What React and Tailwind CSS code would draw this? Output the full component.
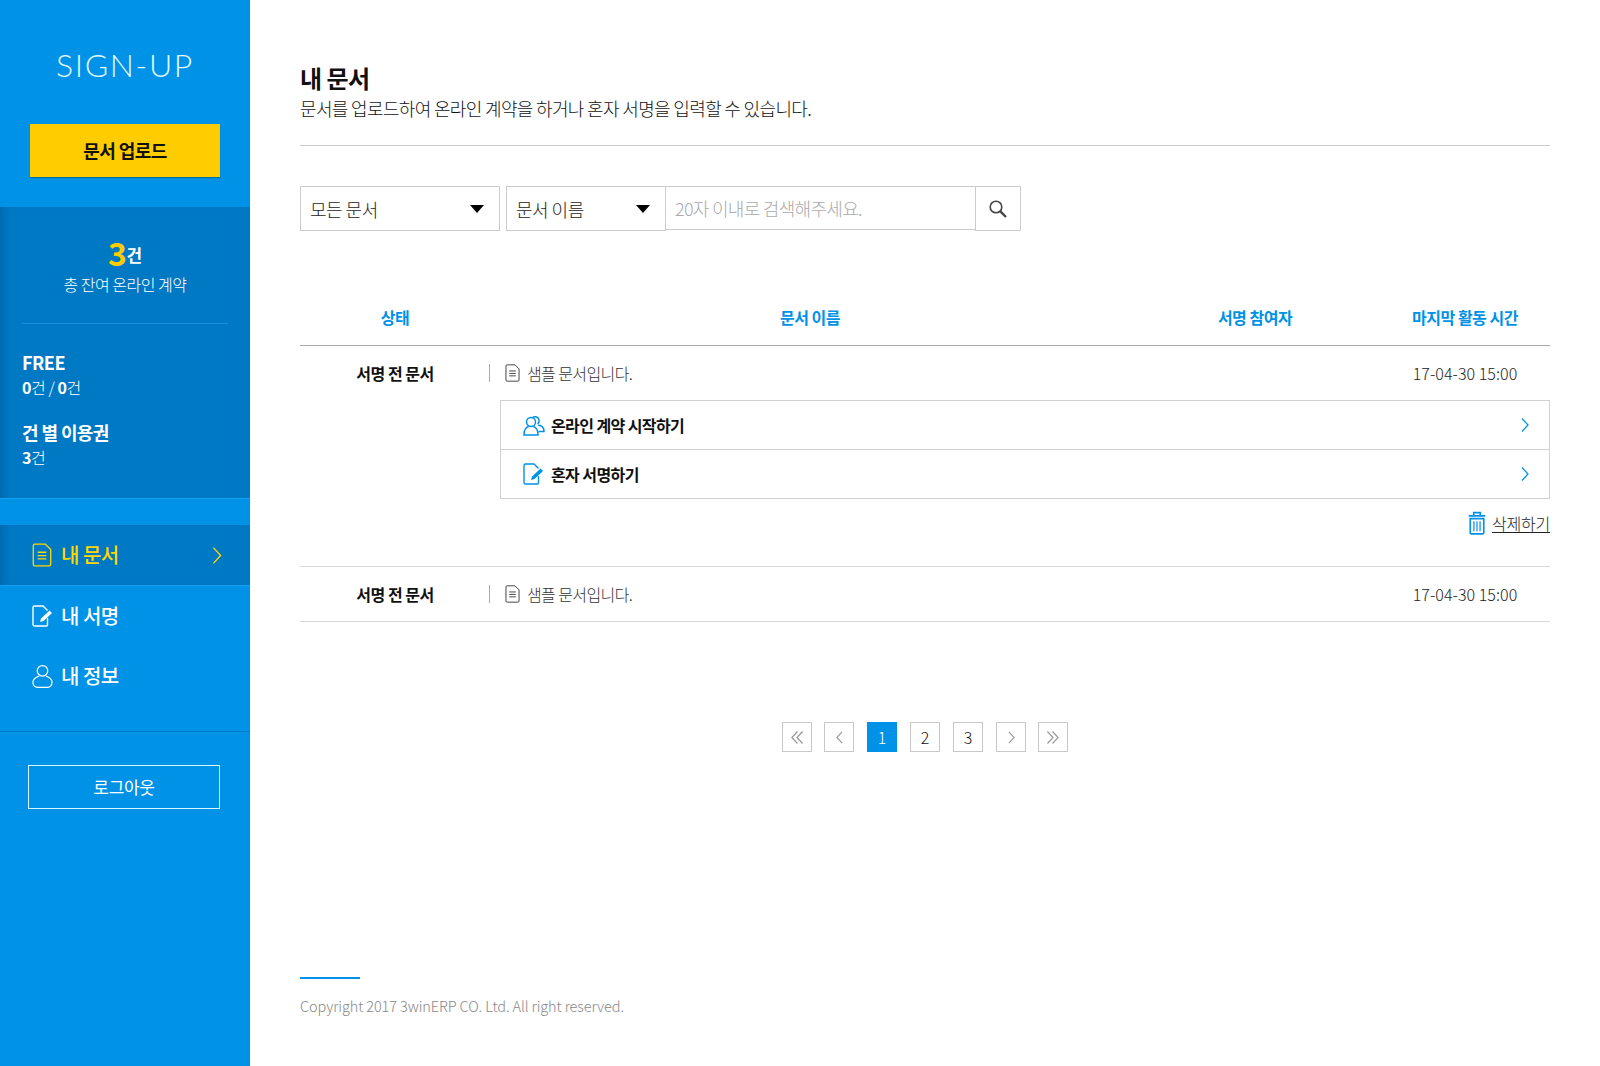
const DocIcon = ({ className }) => (
  <svg viewBox="0 0 18 22" fill="none" stroke="currentColor" strokeWidth="1.2" className={className}>
    <path d="M2.500 1h9.500l5 5v13.500a1.500 1.500 0 0 1-1.500 1.500h-13A1.500 1.500 0 0 1 1 19.500v-17A1.500 1.500 0 0 1 2.500 1z" />
    <path d="M5 8.500h8M5 11.500h8M5 14.500h8" />
  </svg>
);

const SignIcon = ({ className }) => (
  <svg viewBox="0 0 22 22" fill="none" stroke="currentColor" strokeWidth="1.4" className={className}>
    <path d="M15 21H2.500A1.500 1.500 0 0 1 1 19.500v-17A1.500 1.500 0 0 1 2.500 1H11l4.500 4.500" />
    <path d="M15.500 13v6.500a1.500 1.500 0 0 1-.5 1.500" />
    <path d="M8 17l1-3.500 8.500-8 2.500 2.500-8.500 8z" fill="currentColor" stroke="none" />
  </svg>
);

const UserIcon = ({ className }) => (
  <svg viewBox="0 0 22 25" fill="none" stroke="currentColor" strokeWidth="1.3" className={className}>
    <circle cx="11" cy="6.500" r="5.500" />
    <path d="M7.500 12C3.500 13.500 1 15.500 1 18.500c0 3.500 2.500 5.500 5.500 5.500h9c3 0 5.500-2 5.500-5.500 0-3-2.500-5-6.500-6.500" />
  </svg>
);

const UsersIcon = ({ className }) => (
  <svg viewBox="0 0 22 21" fill="none" stroke="currentColor" strokeWidth="1.5" className={className}>
    <circle cx="8" cy="7" r="4.500" />
    <path d="M5.500 11.500C2.500 12.500 1 15 1 20h14c0-5-1.500-7.500-4.500-8.500" />
    <path d="M9.500 2.500a4 4 0 1 1 5 6.500M15 10c3.500.5 6 2.500 6 6.500h-5.500" />
  </svg>
);

const TrashIcon = ({ className }) => (
  <svg viewBox="0 0 16 22" fill="none" stroke="currentColor" strokeWidth="1.500" className={className}>
    <path d="M.5 4.500h15M5 4V1.500h6V4" />
    <path d="M1.800 7h12.400v13a1 1 0 0 1-1 1H2.800a1 1 0 0 1-1-1z" />
    <path d="M5.200 9.500v9M8 9.500v9M10.800 9.500v9" strokeWidth="1.100" />
  </svg>
);

const Chevron = ({ className, strokeWidth = 1.3 }) => (
  <svg viewBox="0 0 8 14" fill="none" stroke="currentColor" strokeWidth={strokeWidth} className={className}>
    <path d="M1 .5L7 7l-6 6.500" />
  </svg>
);

const ChevronBack = ({ className }) => (
  <svg viewBox="0 0 8 14" fill="none" stroke="currentColor" strokeWidth="1.300" className={className}>
    <path d="M7 .5L1 7l6 6.500" />
  </svg>
);

const DoubleBack = ({ className }) => (
  <svg viewBox="0 0 13 14" fill="none" stroke="currentColor" strokeWidth="1.300" className={className}>
    <path d="M7 .5L1 7l6 6.500M12.500 .5L6.500 7l6 6.500" />
  </svg>
);

const DoubleNext = ({ className }) => (
  <svg viewBox="0 0 13 14" fill="none" stroke="currentColor" strokeWidth="1.300" className={className}>
    <path d="M.5 .5L6.500 7l-6 6.500M6 .5L12 7l-6 6.500" />
  </svg>
);

const SearchIcon = ({ className }) => (
  <svg viewBox="0 0 18 18" fill="none" stroke="currentColor" className={className}>
    <circle cx="7" cy="7" r="5.800" strokeWidth="1.600" />
    <path d="M11.300 11.300L17 17" strokeWidth="2.400" />
  </svg>
);

const Caret = () => (
  <span className="w-0 h-0 border-l-[7px] border-r-[7px] border-t-[8px] border-l-transparent border-r-transparent border-t-black" />
);

const NavItem = ({ icon, label, active }) => (
  <div
    className={
      active
        ? "h-[61px] flex items-center pl-[32px] pr-[28px] bg-[#0079c4] border-b border-[#12a2f5] text-[#ffd800] shadow-[inset_8px_0_10px_-6px_rgba(0,60,110,0.35)]"
        : "h-[60px] flex items-center pl-[32px] pr-[28px] text-white"
    }
  >
    {icon}
    <span className="ml-[9px] text-[20px] leading-none font-medium tracking-[-0.5px]">{label}</span>
    {active && <Chevron className="ml-auto w-[10px] h-[17px]" strokeWidth={1.1} />}
  </div>
);

const PageBtn = ({ children, active, className = "" }) => (
  <div
    className={
      (active
        ? "w-[30px] h-[30px] flex items-center justify-center bg-[#0092e6] text-white text-[16px] font-light "
        : "w-[30px] h-[30px] flex items-center justify-center border border-[#c8c8c8] text-[#111] text-[16px] font-light ") + className
    }
  >
    {children}
  </div>
);

const DocRow = () => (
  <div className="flex items-center h-[54px]">
    <div className="w-[190px] text-center text-[16px] font-bold tracking-[-0.5px] text-[#111]">서명 전 문서</div>
    <div className="w-px -ml-px h-[18px] bg-[#aaa] mr-[15px]" />
    <DocIcon className="w-[15px] h-[18px] text-[#444] mr-[7px]" />
    <span className="text-[16px] font-light tracking-[-0.6px] text-[#333]">샘플 문서입니다.</span>
    <div className="ml-auto w-[170px] text-center text-[16px] font-light tracking-[0.05px] text-[#222]">17-04-30 15:00</div>
  </div>
);

const ActionRow = ({ icon, label, bordered }) => (
  <div className={bordered ? "h-[49px] flex items-center pl-[22px] pr-[20px] border-b border-[#d0d0d0]" : "h-[48px] flex items-center pl-[22px] pr-[20px]"}>
    {icon}
    <span className="ml-[6px] text-[16px] font-bold tracking-[-0.6px] text-[#111]">{label}</span>
    <Chevron className="ml-auto w-[8px] h-[14px] text-[#0092e6]" />
  </div>
);

export default function App() {
  return (
    <div className="flex min-h-[1066px] bg-white font-['Noto_Sans_CJK_KR','Noto_Sans',sans-serif]">
      <aside className="w-[250px] shrink-0 bg-[#0092e6] flex flex-col">
        <div className="h-[124px] pt-[43px] text-center text-[32px] leading-[44px] font-light tracking-[1.6px] text-[#e0faff] font-['Lato',sans-serif]">
          SIGN-UP
        </div>
        <div className="mx-[30px] h-[53px] bg-[#ffcc00] flex items-center justify-center text-[18px] font-bold tracking-[-0.6px] text-[#111] shadow-[0_1px_1px_rgba(0,80,90,0.5)]">
          문서 업로드
        </div>
        <div className="mt-[30px] h-[292px] bg-[#0079c4] border-b border-[#12a2f5] shadow-[inset_8px_0_10px_-6px_rgba(0,60,110,0.35)] text-white">
          <div className="mx-[22px] h-[117px] pt-[27px] border-b border-[#1b90d6] text-center">
            <div className="h-[36px] flex items-end justify-center leading-none">
              <span className="text-[32px] font-bold leading-[36px] tracking-[-0.5px] text-[#ffcc00]">3</span>
              <span className="text-[17px] font-bold leading-[30px]">건</span>
            </div>
            <div className="mt-[3px] text-[16px] leading-[22px] font-light tracking-[-0.5px] text-white">총 잔여 온라인 계약</div>
          </div>
          <div className="pl-[22px] pt-[25px]">
            <div className="text-[18px] leading-[26px] font-bold tracking-[-0.5px]">FREE</div>
            <div className="text-[16px] leading-[24px] tracking-[-0.4px] font-light"><span className="font-bold">0</span>건 / <span className="font-bold">0</span>건</div>
            <div className="mt-[20px] text-[18px] leading-[26px] font-bold tracking-[-0.6px]">건 별 이용권</div>
            <div className="text-[16px] leading-[24px] tracking-[-0.4px] font-light"><span className="font-bold">3</span>건</div>
          </div>
        </div>
        <nav className="mt-[26px] pb-[25px] border-b border-[#0079c4]">
          <NavItem active label="내 문서" icon={<DocIcon className="w-[20px] h-[24px]" />} />
          <NavItem label="내 서명" icon={<SignIcon className="w-[22px] h-[22px] -mr-[2px]" />} />
          <NavItem label="내 정보" icon={<UserIcon className="w-[21px] h-[25px] -mr-px" />} />
        </nav>
        <div className="ml-[28px] mt-[33px] w-[192px] h-[44px] border border-[#d8f6ff] flex items-center justify-center text-[17px] text-white font-normal tracking-[-0.3px]">
          로그아웃
        </div>
      </aside>

      <main className="flex-1 pl-[50px] pr-[50px] flex flex-col">
        <h1 className="mt-[61px] text-[24px] leading-[34px] font-bold tracking-[-0.5px] text-[#111]">내 문서</h1>
        <p className="text-[18px] leading-[26px] font-light tracking-[-0.65px] text-[#111]">
          문서를 업로드하여 온라인 계약을 하거나 혼자 서명을 입력할 수 있습니다.
        </p>
        <div className="mt-[24px] h-px bg-[#ccc]" />

        <div className="mt-[40px] flex items-start">
          <div className="w-[200px] h-[45px] border border-[#ccc] flex items-center justify-between pl-[9px] pr-[15px]">
            <span className="pt-[2px] text-[18px] font-light tracking-[-0.5px] text-[#222]">모든 문서</span>
            <Caret />
          </div>
          <div className="ml-[6px] w-[160px] h-[45px] border border-[#ccc] flex items-center justify-between pl-[9px] pr-[15px]">
            <span className="pt-[2px] text-[18px] font-light tracking-[-0.5px] text-[#222]">문서 이름</span>
            <Caret />
          </div>
          <div className="w-[309px] h-[44px] border-y border-[#ccc] flex items-center pl-[9px] text-[18px] font-light tracking-[-0.7px] text-[#aaa]">
            20자 이내로 검색해주세요.
          </div>
          <div className="w-[46px] h-[45px] border border-[#ccc] flex items-center justify-center">
            <SearchIcon className="w-[18px] h-[18px] text-[#444]" />
          </div>
        </div>

        <div className="mt-[60px] flex items-center h-[55px] pb-[3px] border-b border-[#aaa] text-[16px] font-bold tracking-[-0.5px] text-[#0092e6] text-center">
          <div className="w-[190px]">상태</div>
          <div className="w-[640px]">문서 이름</div>
          <div className="w-[250px]">서명 참여자</div>
          <div className="w-[170px]">마지막 활동 시간</div>
        </div>

        <DocRow />
        <div className="ml-[200px] border border-[#d0d0d0]">
          <ActionRow bordered label="온라인 계약 시작하기" icon={<UsersIcon className="w-[22px] h-[21px] text-[#0092e6]" />} />
          <ActionRow label="혼자 서명하기" icon={<SignIcon className="w-[22px] h-[22px] text-[#0092e6]" />} />
        </div>
        <div className="mt-[12px] flex items-center justify-end h-[24px]">
          <TrashIcon className="w-[18px] h-[24px] text-[#0092e6] mr-[6px]" />
          <span className="text-[16px] font-light tracking-[-0.25px] text-[#222] underline underline-offset-2">삭제하기</span>
        </div>
        <div className="mt-[31px] border-y border-[#d8d8d8]">
          <DocRow />
        </div>

        <div className="mt-[100px] flex items-center justify-center gap-[13px]">
          <PageBtn className="-mr-px"><DoubleBack className="w-[12px] h-[13px] text-[#999]" /></PageBtn>
          <PageBtn><ChevronBack className="w-[7px] h-[13px] text-[#999]" /></PageBtn>
          <PageBtn active>1</PageBtn>
          <PageBtn>2</PageBtn>
          <PageBtn>3</PageBtn>
          <PageBtn className="-mr-px"><Chevron className="w-[7px] h-[13px] text-[#999]" /></PageBtn>
          <PageBtn><DoubleNext className="w-[12px] h-[13px] text-[#999]" /></PageBtn>
        </div>

        <div className="mt-[225px] w-[60px] h-[2px] bg-[#0092e6]" />
        <div className="mt-[16px] text-[14.5px] leading-[22px] font-light text-[#888] tracking-[-0.1px]">
          Copyright 2017 3winERP CO. Ltd. All right reserved.
        </div>
      </main>
    </div>
  );
}
